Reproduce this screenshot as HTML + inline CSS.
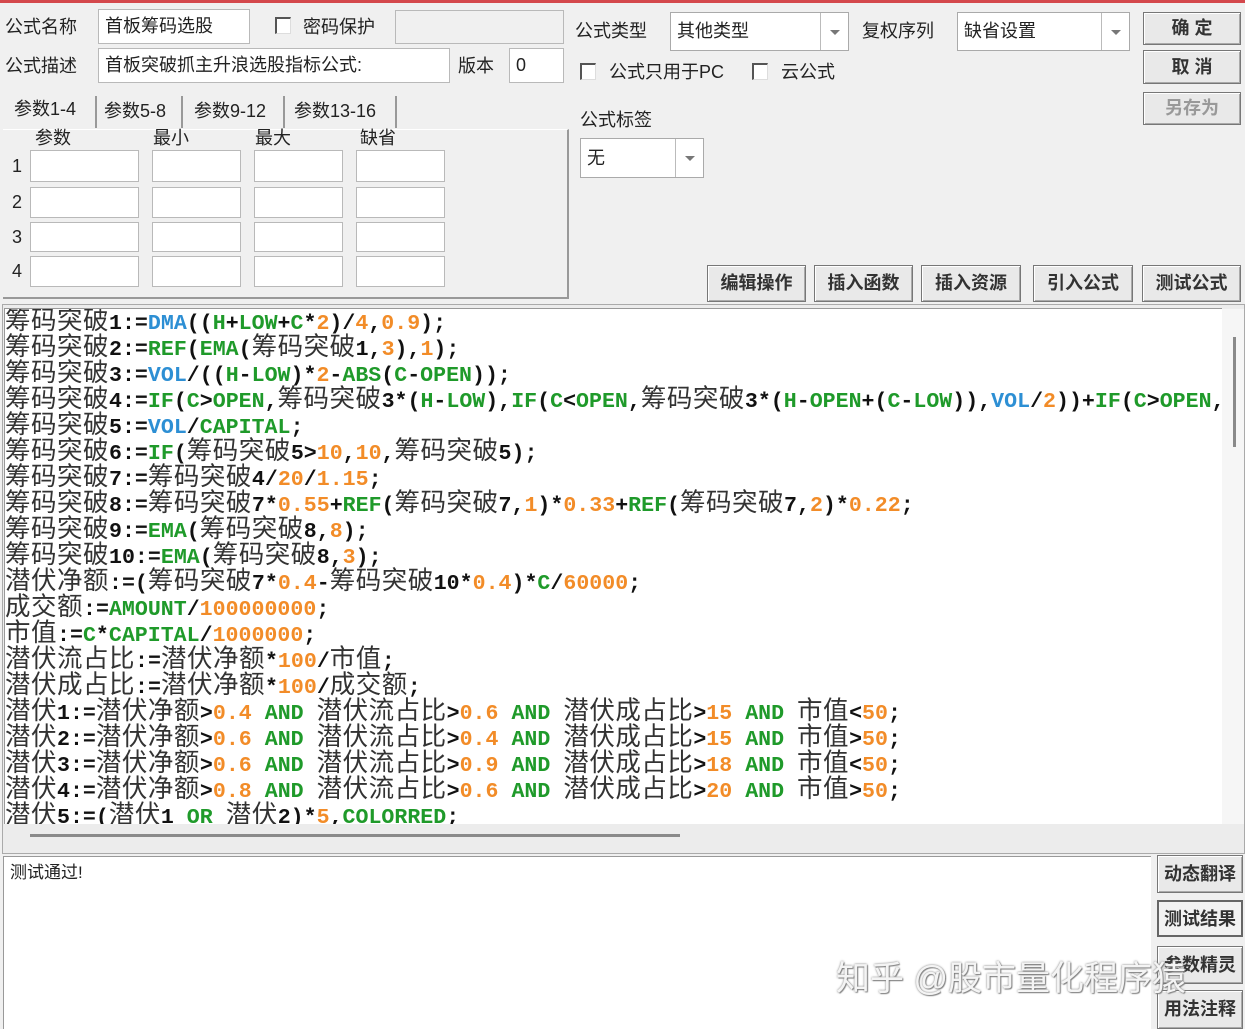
<!DOCTYPE html>
<html><head><meta charset="utf-8">
<style>
*{margin:0;padding:0;box-sizing:border-box}
html,body{width:1245px;height:1029px;overflow:hidden;background:#f0f0f0;font-family:"Liberation Sans","Noto Sans CJK SC",sans-serif;color:#222}
.a{position:absolute}
.t{position:absolute;font-size:18px;line-height:20px;white-space:nowrap}
.in{position:absolute;background:#fff;border:1px solid #b9b9b9;font-size:18px;line-height:32px;padding-left:6px;white-space:nowrap}
.cb{position:absolute;width:16px;height:17px;background:#fff;border-left:2px solid #555;border-top:2px solid #555;border-right:1px solid #ddd;border-bottom:1px solid #ddd}
.sel{position:absolute;background:#fff;border:1px solid #aaa;font-size:18px;padding-left:6px;white-space:nowrap}
.sel .d{position:absolute;right:0;top:0;bottom:0;width:28px;border-left:1px solid #bbb}
.sel .d:after{content:"";position:absolute;left:9px;top:50%;margin-top:-2px;border-left:5px solid transparent;border-right:5px solid transparent;border-top:5px solid #777}
.btn{position:absolute;background:#e9e9e9;border:1px solid #777;box-shadow:inset 1px 1px 0 #fff,inset -1px -1px 0 #aaa;font-size:18px;text-align:center;white-space:nowrap;font-weight:bold;color:#333}
.code{position:absolute;left:4px;top:308px;width:1218px;height:516px;background:#fff;overflow:hidden;border-top:1px solid #999;border-left:1px solid #999}
.code div{height:26px;line-height:26px;white-space:nowrap;font-family:"Liberation Mono",monospace;font-weight:bold;font-size:21.6px;color:#111;position:relative;top:-3px}
.code i{font-style:normal;font-weight:normal;font-family:"Noto Sans CJK SC","WenQuanYi Zen Hei",sans-serif;font-size:25.5px;color:#333;letter-spacing:0.5px}
g{color:#1f9a2a}u{text-decoration:none;color:#2d8fd4}n{color:#f28c28}
</style></head><body>
<div class="a" style="left:0;top:0;width:1245px;height:3px;background:#d4484c"></div>

<div class="t" style="left:5px;top:17px">公式名称</div>
<div class="in" style="left:98px;top:9px;width:152px;height:35px">首板筹码选股</div>
<div class="cb" style="left:275px;top:17px"></div>
<div class="t" style="left:303px;top:17px">密码保护</div>
<div class="a" style="left:395px;top:10px;width:169px;height:34px;border:1px solid #b9b9b9;background:#f0f0f0"></div>
<div class="t" style="left:5px;top:56px">公式描述</div>
<div class="in" style="left:98px;top:48px;width:352px;height:35px">首板突破抓主升浪选股指标公式:</div>
<div class="t" style="left:458px;top:56px">版本</div>
<div class="in" style="left:509px;top:48px;width:55px;height:35px">0</div>

<div class="a" style="left:3px;top:129px;width:566px;height:170px;border-right:2px solid #999;border-bottom:2px solid #999;border-top:1px solid #fff"></div>
<div class="t" style="left:14px;top:99px">参数1-4</div>
<div class="a" style="left:95px;top:96px;width:2px;height:32px;background:#999"></div>
<div class="t" style="left:104px;top:101px">参数5-8</div>
<div class="a" style="left:181px;top:96px;width:2px;height:32px;background:#999"></div>
<div class="t" style="left:194px;top:101px">参数9-12</div>
<div class="a" style="left:283px;top:96px;width:2px;height:32px;background:#999"></div>
<div class="t" style="left:294px;top:101px">参数13-16</div>
<div class="a" style="left:395px;top:96px;width:2px;height:32px;background:#999"></div>
<div class="t" style="left:35px;top:128px">参数</div>
<div class="t" style="left:153px;top:128px">最小</div>
<div class="t" style="left:255px;top:128px">最大</div>
<div class="t" style="left:360px;top:128px">缺省</div>

<div class="t" style="left:12px;top:156px">1</div>
<div class="t" style="left:12px;top:192px">2</div>
<div class="t" style="left:12px;top:227px">3</div>
<div class="t" style="left:12px;top:261px">4</div>
<div class="in" style="left:30px;top:150px;width:109px;height:32px"></div>
<div class="in" style="left:152px;top:150px;width:89px;height:32px"></div>
<div class="in" style="left:254px;top:150px;width:89px;height:32px"></div>
<div class="in" style="left:356px;top:150px;width:89px;height:32px"></div>
<div class="in" style="left:30px;top:187px;width:109px;height:31px"></div>
<div class="in" style="left:152px;top:187px;width:89px;height:31px"></div>
<div class="in" style="left:254px;top:187px;width:89px;height:31px"></div>
<div class="in" style="left:356px;top:187px;width:89px;height:31px"></div>
<div class="in" style="left:30px;top:222px;width:109px;height:30px"></div>
<div class="in" style="left:152px;top:222px;width:89px;height:30px"></div>
<div class="in" style="left:254px;top:222px;width:89px;height:30px"></div>
<div class="in" style="left:356px;top:222px;width:89px;height:30px"></div>
<div class="in" style="left:30px;top:256px;width:109px;height:31px"></div>
<div class="in" style="left:152px;top:256px;width:89px;height:31px"></div>
<div class="in" style="left:254px;top:256px;width:89px;height:31px"></div>
<div class="in" style="left:356px;top:256px;width:89px;height:31px"></div>

<div class="t" style="left:575px;top:21px">公式类型</div>
<div class="sel" style="left:670px;top:12px;width:179px;height:39px;line-height:37px">其他类型<span class="d"></span></div>
<div class="t" style="left:862px;top:21px">复权序列</div>
<div class="sel" style="left:957px;top:12px;width:173px;height:39px;line-height:37px">缺省设置<span class="d"></span></div>
<div class="cb" style="left:580px;top:63px"></div>
<div class="t" style="left:609px;top:62px">公式只用于PC</div>
<div class="cb" style="left:752px;top:63px"></div>
<div class="t" style="left:781px;top:62px">云公式</div>
<div class="t" style="left:580px;top:110px">公式标签</div>
<div class="sel" style="left:580px;top:138px;width:124px;height:40px;line-height:38px">无<span class="d"></span></div>

<div class="btn" style="left:1143px;top:12px;width:98px;height:33px;line-height:31px">确 定</div>
<div class="btn" style="left:1143px;top:50px;width:98px;height:34px;line-height:32px">取 消</div>
<div class="btn" style="left:1143px;top:92px;width:98px;height:33px;line-height:31px;color:#999">另存为</div>

<div class="btn" style="left:707px;top:265px;width:99px;height:37px;line-height:35px">编辑操作</div>
<div class="btn" style="left:814px;top:265px;width:99px;height:37px;line-height:35px">插入函数</div>
<div class="btn" style="left:921px;top:265px;width:100px;height:37px;line-height:35px">插入资源</div>
<div class="btn" style="left:1033px;top:265px;width:100px;height:37px;line-height:35px">引入公式</div>
<div class="btn" style="left:1142px;top:265px;width:99px;height:37px;line-height:35px">测试公式</div>

<div class="a" style="left:2px;top:304px;width:1243px;height:550px;border:1px solid #aaa;background:#ececec"></div>
<div class="code">
<div><i>筹码突破</i>1:=<u>DMA</u>((<g>H</g>+<g>LOW</g>+<g>C</g>*<n>2</n>)/<n>4</n>,<n>0.9</n>);</div>
<div><i>筹码突破</i>2:=<g>REF</g>(<g>EMA</g>(<i>筹码突破</i>1,<n>3</n>),<n>1</n>);</div>
<div><i>筹码突破</i>3:=<u>VOL</u>/((<g>H</g>-<g>LOW</g>)*<n>2</n>-<g>ABS</g>(<g>C</g>-<g>OPEN</g>));</div>
<div><i>筹码突破</i>4:=<g>IF</g>(<g>C</g>&gt;<g>OPEN</g>,<i>筹码突破</i>3*(<g>H</g>-<g>LOW</g>),<g>IF</g>(<g>C</g>&lt;<g>OPEN</g>,<i>筹码突破</i>3*(<g>H</g>-<g>OPEN</g>+(<g>C</g>-<g>LOW</g>)),<u>VOL</u>/<n>2</n>))+<g>IF</g>(<g>C</g>&gt;<g>OPEN</g>,</div>
<div><i>筹码突破</i>5:=<u>VOL</u>/<g>CAPITAL</g>;</div>
<div><i>筹码突破</i>6:=<g>IF</g>(<i>筹码突破</i>5&gt;<n>10</n>,<n>10</n>,<i>筹码突破</i>5);</div>
<div><i>筹码突破</i>7:=<i>筹码突破</i>4/<n>20</n>/<n>1.15</n>;</div>
<div><i>筹码突破</i>8:=<i>筹码突破</i>7*<n>0.55</n>+<g>REF</g>(<i>筹码突破</i>7,<n>1</n>)*<n>0.33</n>+<g>REF</g>(<i>筹码突破</i>7,<n>2</n>)*<n>0.22</n>;</div>
<div><i>筹码突破</i>9:=<g>EMA</g>(<i>筹码突破</i>8,<n>8</n>);</div>
<div><i>筹码突破</i>10:=<g>EMA</g>(<i>筹码突破</i>8,<n>3</n>);</div>
<div><i>潜伏净额</i>:=(<i>筹码突破</i>7*<n>0.4</n>-<i>筹码突破</i>10*<n>0.4</n>)*<g>C</g>/<n>60000</n>;</div>
<div><i>成交额</i>:=<g>AMOUNT</g>/<n>100000000</n>;</div>
<div><i>市值</i>:=<g>C</g>*<g>CAPITAL</g>/<n>1000000</n>;</div>
<div><i>潜伏流占比</i>:=<i>潜伏净额</i>*<n>100</n>/<i>市值</i>;</div>
<div><i>潜伏成占比</i>:=<i>潜伏净额</i>*<n>100</n>/<i>成交额</i>;</div>
<div><i>潜伏</i>1:=<i>潜伏净额</i>&gt;<n>0.4</n> <g>AND</g> <i>潜伏流占比</i>&gt;<n>0.6</n> <g>AND</g> <i>潜伏成占比</i>&gt;<n>15</n> <g>AND</g> <i>市值</i>&lt;<n>50</n>;</div>
<div><i>潜伏</i>2:=<i>潜伏净额</i>&gt;<n>0.6</n> <g>AND</g> <i>潜伏流占比</i>&gt;<n>0.4</n> <g>AND</g> <i>潜伏成占比</i>&gt;<n>15</n> <g>AND</g> <i>市值</i>&gt;<n>50</n>;</div>
<div><i>潜伏</i>3:=<i>潜伏净额</i>&gt;<n>0.6</n> <g>AND</g> <i>潜伏流占比</i>&gt;<n>0.9</n> <g>AND</g> <i>潜伏成占比</i>&gt;<n>18</n> <g>AND</g> <i>市值</i>&lt;<n>50</n>;</div>
<div><i>潜伏</i>4:=<i>潜伏净额</i>&gt;<n>0.8</n> <g>AND</g> <i>潜伏流占比</i>&gt;<n>0.6</n> <g>AND</g> <i>潜伏成占比</i>&gt;<n>20</n> <g>AND</g> <i>市值</i>&gt;<n>50</n>;</div>
<div><i>潜伏</i>5:=(<i>潜伏</i>1 <g>OR</g> <i>潜伏</i>2)*<n>5</n>,<g>COLORRED</g>;</div>
</div>
<div class="a" style="left:1222px;top:309px;width:22px;height:515px;background:#f6f6f6"></div>
<div class="a" style="left:1233px;top:337px;width:3px;height:110px;background:#8a8a8a"></div>
<div class="a" style="left:30px;top:834px;width:650px;height:3px;background:#8a8a8a"></div>

<div class="a" style="left:3px;top:856px;width:1148px;height:173px;background:#fff;border-top:1px solid #999;border-left:1px solid #999"></div>
<div class="t" style="left:10px;top:863px;font-size:17px">测试通过!</div>
<div class="btn" style="left:1157px;top:855px;width:86px;height:38px;line-height:36px">动态翻译</div>
<div class="btn" style="left:1157px;top:900px;width:86px;height:37px;line-height:35px;border:2px solid #666;box-shadow:none;background:#f2f2f2">测试结果</div>
<div class="btn" style="left:1157px;top:946px;width:86px;height:38px;line-height:36px">参数精灵</div>
<div class="btn" style="left:1157px;top:990px;width:86px;height:39px;line-height:37px">用法注释</div>
<div class="t" style="left:836px;top:958px;font-size:34px;line-height:42px;color:#f4f4f4;text-shadow:0 0 2px #777,1px 1px 1px #888">知乎 @股市量化程序猿</div>
</body></html>
